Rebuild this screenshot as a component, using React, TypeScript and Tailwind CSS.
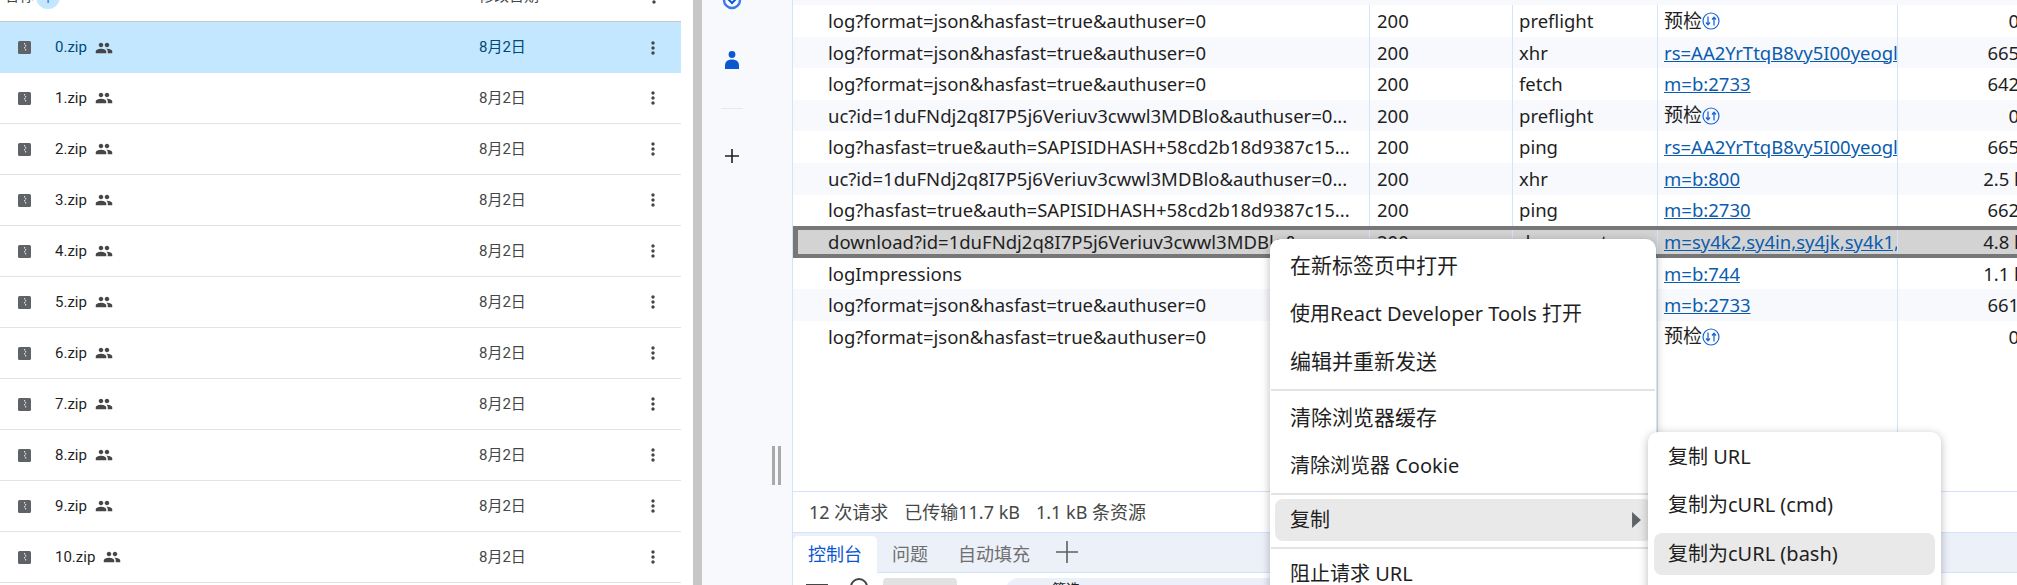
import React from "react";
import { MdPeople, MdMoreVert } from "react-icons/md";

const files = ["0.zip", "1.zip", "2.zip", "3.zip", "4.zip", "5.zip", "6.zip", "7.zip", "8.zip", "9.zip", "10.zip"];

const LOG = "log?format=json&hasfast=true&authuser=0";
const UC = "uc?id=1duFNdj2q8I7P5j6Veriuv3cwwl3MDBlo&authuser=0...";
const PING = "log?hasfast=true&auth=SAPISIDHASH+58cd2b18d9387c15...";
const RS = "rs=AA2YrTtqB8vy5I00yeoglKzBqXhQmLw";

interface Req {
    name: string;
    type: string;
    initiator: string | null;
    size: string;
    selected?: boolean;
}

const requests: Req[] = [
    { name: LOG, type: "preflight", initiator: null, size: "0 B" },
    { name: LOG, type: "xhr", initiator: RS, size: "665 B" },
    { name: LOG, type: "fetch", initiator: "m=b:2733", size: "642 B" },
    { name: UC, type: "preflight", initiator: null, size: "0 B" },
    { name: PING, type: "ping", initiator: RS, size: "665 B" },
    { name: UC, type: "xhr", initiator: "m=b:800", size: "2.5 kB" },
    { name: PING, type: "ping", initiator: "m=b:2730", size: "662 B" },
    {
        name: "download?id=1duFNdj2q8I7P5j6Veriuv3cwwl3MDBlo&expo...",
        type: "document",
        initiator: "m=sy4k2,sy4in,sy4jk,sy4k1,sy4k3,sy4k4",
        size: "4.8 kB",
        selected: true,
    },
    { name: "logImpressions", type: "ping", initiator: "m=b:744", size: "1.1 kB" },
    { name: LOG, type: "fetch", initiator: "m=b:2733", size: "661 B" },
    { name: LOG, type: "preflight", initiator: null, size: "0 B" },
];

const ZipIcon = () => (
    <svg viewBox="0 0 13 13" className="w-[13px] h-[13px]">
        <rect width="13" height="13" rx="1.5" fill="#5f6368" />
        <path d="M6 2h1.2v1.4H6zM7 4h1.2v1.4H7zM6 6h1.2v1.4H6zM7 8h1.2v1.4H7z" fill="#d5d7da" />
    </svg>
);

const PreflightIcon = () => (
    <svg viewBox="0 0 18 18" className="w-[18px] h-[18px] shrink-0">
        <circle cx="9" cy="9" r="8" fill="none" stroke="#1a66d6" strokeWidth="1.2" />
        <path d="M6 4.5v8M4 10.5l2 2.2 2-2.2M12 13.5v-8M10 7.5l2-2.2 2 2.2" fill="none" stroke="#1a66d6" strokeWidth="1.3" />
    </svg>
);

const Row: React.FC<{ req: Req; tinted: boolean }> = ({ req, tinted }) => {
    const bg = req.selected
        ? "bg-[#d3d3d3] border-y-4 border-l-[5px] border-[#777777]"
        : tinted
          ? "bg-[#f8f9fd]"
          : "bg-white";
    return (
        <div className={`flex shrink-0 h-[31.6px] items-center text-[18.5px] ${bg}`}>
            <div className={`h-full flex items-center overflow-hidden whitespace-nowrap border-r border-[#d3e3fd] ${req.selected ? "w-[572px] pl-[30px]" : "w-[577px] pl-[35px]"}`}>
                {req.name}
            </div>
            <div className="w-[143px] h-full flex items-center pl-[7px] border-r border-[#d3e3fd]">200</div>
            <div className="w-[145px] h-full flex items-center pl-[6px] border-r border-[#d3e3fd]">{req.type}</div>
            <div className="w-[240px] h-full flex items-center pl-[6px] border-r border-[#d3e3fd] overflow-hidden whitespace-nowrap">
                {req.initiator ? (
                    <span className="text-[#0b5cad] underline">{req.initiator}</span>
                ) : (
                    <>
                        <span className="text-[19px]">预检</span>
                        <PreflightIcon />
                    </>
                )}
            </div>
            <div className="w-[138px] h-full flex items-center justify-end whitespace-nowrap">{req.size}</div>
        </div>
    );
};

const MenuItem: React.FC<{ label: string; wide?: boolean }> = ({ label, wide }) => (
    <div className={`h-12 flex items-center pl-[15px] ${wide ? "text-[21px]" : ""}`}>{label}</div>
);

export default function App() {
    return (
        <div className="relative flex w-[2017px] h-[585px] overflow-hidden bg-white text-[#1f1f1f] font-['Noto_Sans','Noto_Sans_CJK_SC',sans-serif]">
            {/* Drive file list */}
            <div className="w-[693px] shrink-0 font-['Roboto','Noto_Sans_CJK_SC',sans-serif]">
                <div className="w-[681px]">
                    <div className="-mt-[25px] h-[47px] flex items-center border-b border-[#c7c7c7] text-[15px] text-[#444746] pb-[3px]">
                        <span className="pl-1 w-[36px]">名称</span>
                        <span className="w-6 h-6 rounded-full bg-[#c2e7ff] flex items-center justify-center text-[#0b57d0] text-sm">↑</span>
                        <span className="ml-[419px] w-[165px]">修改日期</span>
                        <MdMoreVert className="w-5 h-5" />
                    </div>
                    {files.map((f, i) => (
                        <div
                            key={f}
                            className={`h-[51px] grid grid-cols-[55px_424px_164px_1fr] items-center text-[15px] ${
                                i === 0 ? "bg-[#c2e7ff] text-[#004a77]" : "border-b border-[#e3e3e3]"
                            }`}
                        >
                            <div className="pl-[18px]">
                                <ZipIcon />
                            </div>
                            <div className="flex items-center gap-[8px]">
                                <span>{f}</span>
                                <MdPeople className="w-[18px] h-[18px] text-[#444746]" />
                            </div>
                            <div className={i === 0 ? "" : "text-[#444746]"}>8月2日</div>
                            <MdMoreVert className="w-5 h-5 text-[#444746]" />
                        </div>
                    ))}
                </div>
            </div>

            {/* Gutter */}
            <div className="w-[9px] shrink-0 bg-[#c7c7c7]" />

            {/* DevTools side bar */}
            <div className="w-[91px] shrink-0 bg-[#f8f9fd] border-r border-[#d3e3fd] flex flex-col items-center pr-[30px]">
                <svg viewBox="0 0 20 20" className="w-5 h-5 -mt-[10px] shrink-0">
                    <circle cx="10" cy="10" r="8" fill="none" stroke="#3b78e7" strokeWidth="2.4" />
                    <path d="M6 9l4 4 4-4" fill="none" stroke="#0b57d0" strokeWidth="2" />
                </svg>
                <svg viewBox="0 0 16 18" className="w-4 h-[18px] mt-[41px] shrink-0">
                    <circle cx="8" cy="3.5" r="3.4" fill="#0b57d0" />
                    <path d="M1 18v-3.5C1 10.5 4 8.5 8 8.5s7 2 7 6V18z" fill="#0b57d0" />
                </svg>
                <div className="w-[22px] h-px bg-[#e6e8ee] mt-[39px] shrink-0" />
                <svg viewBox="0 0 16 16" className="w-4 h-4 mt-[39px] shrink-0">
                    <path d="M8 1v14M1 8h14" stroke="#1f1f1f" strokeWidth="1.6" />
                </svg>
                <div className="flex gap-[3px] mt-[282px] self-end -mr-[19px] shrink-0">
                    <div className="w-[3px] h-[39px] bg-[#a9a9a9]" />
                    <div className="w-[3px] h-[39px] bg-[#a9a9a9]" />
                </div>
            </div>

            {/* Network panel */}
            <div className="flex-1 min-w-0 flex flex-col text-[18px]">
                <div className="h-[491px] shrink-0 flex flex-col overflow-hidden w-[1243px]">
                    <div className="h-[5px] shrink-0 bg-[#f8f9fd]" />
                    {requests.map((r, i) => (
                        <Row key={i} req={r} tinted={i % 2 === 1} />
                    ))}
                    <div className="flex-1 flex">
                        <div className="w-[577px] border-r border-[#d3e3fd]" />
                        <div className="w-[143px] border-r border-[#d3e3fd]" />
                        <div className="w-[145px] border-r border-[#d3e3fd]" />
                        <div className="w-[240px] border-r border-[#d3e3fd]" />
                    </div>
                </div>
                <div className="h-[41px] shrink-0 border-t border-[#d3e3fd] flex items-center pl-[16px] gap-[16px] text-[#444746]">
                    <span>12 次请求</span>
                    <span>已传输11.7 kB</span>
                    <span>1.1 kB 条资源</span>
                </div>
                <div className="h-[41px] shrink-0 border-y border-[#d3e3fd] bg-[#ebf0f9] flex items-end text-[#6f6f6f]">
                    <div className="h-[37px] w-[84px] -mb-px bg-white rounded-t-[5px] flex items-center justify-center text-[#0b57d0]">控制台</div>
                    <span className="ml-[15px] h-[36px] flex items-center">问题</span>
                    <span className="ml-[30px] h-[36px] flex items-center">自动填充</span>
                    <svg viewBox="0 0 22 22" className="w-[22px] h-[22px] ml-[26px] mb-[9px]">
                        <path d="M11 0v22M0 11h22" stroke="#5f5f5f" strokeWidth="1.6" />
                    </svg>
                </div>
                <div className="flex-1 flex items-start overflow-hidden pt-[5px] text-[14px]">
                    <div className="w-[22px] h-[2px] bg-[#444746] ml-[13px] mt-[6px]" />
                    <div className="w-[18px] h-[18px] rounded-full border-2 border-[#444746] ml-[22px]" />
                    <div className="w-[74px] h-7 bg-[#e2e2e2] rounded-t-[4px] ml-[15px]" />
                    <div className="w-[400px] h-7 bg-[#ebf0f9] rounded-t-[12px] ml-[49px] pl-[46px] pt-[4px] leading-[14px]">筛选</div>
                </div>
            </div>

            {/* Context menu */}
            <div className="absolute left-[1270px] top-[239px] w-[386px] h-[360px] bg-white rounded-[10px] shadow-[0_2px_10px_rgba(0,0,0,0.28)] pt-[3px] px-[5px] text-[20px]">
                <MenuItem label="在新标签页中打开" wide />
                <MenuItem label="使用React Developer Tools 打开" />
                <MenuItem label="编辑并重新发送" wide />
                <div className="h-[2px] bg-[#e3e3e3] my-[3px] -mx-[4px]" />
                <MenuItem label="清除浏览器缓存" wide />
                <MenuItem label="清除浏览器 Cookie" />
                <div className="h-[2px] bg-[#e3e3e3] my-[3px] -mx-[4px]" />
                <div className="h-[42px] mt-[4px] bg-[#e9e9e9] rounded-[8px] flex items-center justify-between pl-[15px] pr-[11px] -mr-px">
                    复制
                    <svg viewBox="0 0 10 18" className="w-[9px] h-4">
                        <path d="M0 0l10 9-10 9z" fill="#5f6368" />
                    </svg>
                </div>
                <div className="h-[2px] bg-[#e3e3e3] mt-[6px] mb-px -mx-[4px]" />
                <MenuItem label="阻止请求 URL" />
            </div>

            {/* Copy sub menu */}
            <div className="absolute left-[1648px] top-[432px] w-[293px] h-[180px] bg-white rounded-[10px] shadow-[0_2px_10px_rgba(0,0,0,0.28)] pt-px px-[6px] text-[20px]">
                <div className="h-12 flex items-center pl-[14px]">复制 URL</div>
                <div className="h-12 flex items-center pl-[14px]">复制为cURL (cmd)</div>
                <div className="h-[42px] mt-[4px] bg-[#e9e9e9] rounded-[8px] flex items-center pl-[14px]">复制为cURL (bash)</div>
            </div>
        </div>
    );
}
